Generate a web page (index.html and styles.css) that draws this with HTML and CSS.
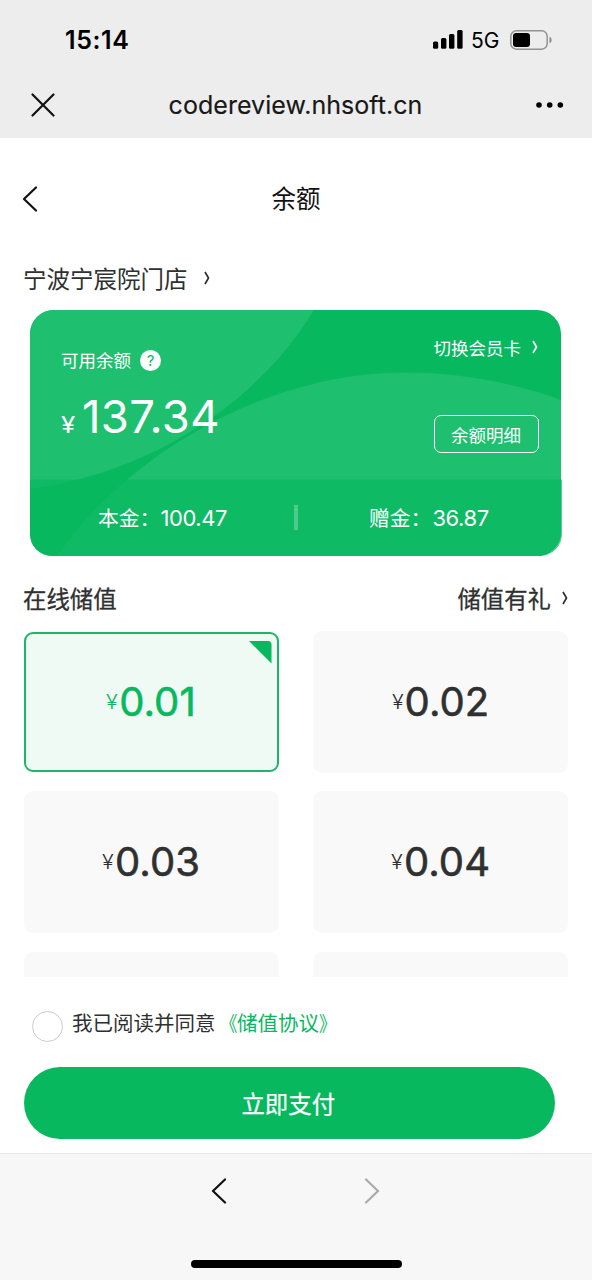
FILE: index.html
```html
<!DOCTYPE html>
<html lang="zh-CN">
<head>
<meta charset="utf-8">
<title>余额</title>
<link rel="stylesheet" href="styles.css">
</head>
<body>
<div class="app">
  <header class="browser">
    <div class="status">
      <span class="clock">15:14</span>
      <div class="indicators">
        <svg class="signal" width="30" height="19" viewBox="0 0 30 19"><rect x="0" y="11.5" width="5.2" height="7.2" rx="1.5"/><rect x="8" y="8" width="5.4" height="10.7" rx="1.5"/><rect x="16" y="4" width="5.4" height="14.7" rx="1.5"/><rect x="24.2" y="0" width="5.4" height="18.7" rx="1.5"/></svg>
        <span class="network">5G</span>
        <svg width="42" height="20" viewBox="0 0 42 20"><rect x=".8" y=".8" width="36.4" height="18.4" rx="5.5" fill="none" stroke="#929292" stroke-width="1.5"/><rect x="3" y="3" width="17" height="14" rx="3.2"/><path d="M39.5 6.8c2.8 1 2.8 5.4 0 6.4z" fill="#888"/></svg>
      </div>
    </div>
    <div class="address">
      <svg width="24" height="24" viewBox="0 0 24 24" class="line"><path d="M1.5 1.5l21 21M22.500 1.500l-21 21"/></svg>
      <span class="domain">codereview.nhsoft.cn</span>
      <svg width="28" height="6" viewBox="0 0 28 6"><circle cx="3" cy="3" r="2.8"/><circle cx="13.700" cy="3" r="2.8"/><circle cx="24.300" cy="3" r="2.800"/></svg>
    </div>
  </header>

  <div class="titlebar">
    <svg width="16" height="26" viewBox="0 0 16 26" class="line"><path d="M14 1.500L2 13l12 11.500"/></svg>
    <h1 class="title">余额</h1>
  </div>

  <div class="store">
    <span>宁波宁宸院门店</span>
    <svg width="8" height="14" viewBox="0 0 8 14" class="chevron"><path d="M2 1l3.500 6L2 13"/></svg>
  </div>

  <section class="card">
    <svg class="card-art" width="532" height="246" viewBox="0 0 532 246">
      <path class="base" d="M24 0H507a24 24 0 0 1 24 24V222a24 24 0 0 1-24 24H22A22 22 0 0 1 0 224V24A24 24 0 0 1 24 0z"/>
      <path class="wave" d="M0 179C105 165 220 105 284 0H24A24 24 0 0 0 0 24z"/>
      <path class="wave" d="M27 246C97 145 235 62.500 375 62.500C430 62.500 485 73 531 90V222a24 24 0 0 1-24 24z"/>
      <path class="strip" d="M0 169.500H532V224a22 22 0 0 1-22 22H22A22 22 0 0 1 0 224z"/>
    </svg>
    <div class="card-main">
      <div class="balance">
        <div class="label">可用余额 <span class="help">?</span></div>
        <div class="amount"><span class="yen">¥</span><span class="value">137.34</span></div>
      </div>
      <div class="card-actions">
        <div class="switch">切换会员卡 <svg width="8" height="14" viewBox="0 0 8 14" class="chevron"><path d="M2 1l3.500 6L2 13"/></svg></div>
        <div class="details">余额明细</div>
      </div>
    </div>
    <div class="split">
      <div class="part principal">本金：<span class="num">100.47</span></div>
      <i class="divider"></i>
      <div class="part bonus">赠金：<span class="num">36.87</span></div>
    </div>
  </section>

  <div class="section-head">
    <span>在线储值</span>
    <span class="gift">储值有礼 <svg width="8" height="14" viewBox="0 0 8 14" class="chevron"><path d="M2 1l3.500 6L2 13"/></svg></span>
  </div>

  <div class="options">
    <div class="option selected"><span class="sym">¥</span><span class="price">0.01</span>
      <svg class="corner" width="23" height="23" viewBox="0 0 23 23"><path d="M0 0H19a3.500 3.500 0 0 1 3.500 3.500V22.500z"/></svg></div>
    <div class="option"><span class="sym">¥</span><span class="price">0.02</span></div>
    <div class="option"><span class="sym">¥</span><span class="price">0.03</span></div>
    <div class="option"><span class="sym">¥</span><span class="price">0.04</span></div>
    <div class="option"></div>
    <div class="option"></div>
  </div>

  <div class="agree">
    <i class="radio"></i>
    <span class="terms">我已阅读并同意<span class="link"><span class="mark open">《</span>储值协议<span class="mark close">》</span></span></span>
  </div>
  <div class="pay">立即支付</div>

  <footer class="toolbar">
    <div class="history">
      <svg width="16" height="26" viewBox="0 0 16 26" class="line"><path d="M14 1.500L2 13l12 11.500"/></svg>
      <svg width="16" height="26" viewBox="0 0 16 26" class="line muted"><path d="M2 1.500L14 13 2 24.500"/></svg>
    </div>
    <div class="home"></div>
  </footer>
</div>
</body>
</html>
```
FILE: styles.css
```css
* { box-sizing: border-box; }
body { margin: 0; background: #fff; color: #2f3030; font-family: Inter, "Noto Sans CJK SC", sans-serif; }
svg { display: block; flex: none; }
.app { width: 592px; height: 1280px; display: flex; flex-direction: column; overflow: hidden; }
.app > * { flex: none; }
.line { fill: none; stroke: #111; stroke-width: 2.2; stroke-linecap: round; stroke-linejoin: round; }
.muted { stroke: #aaa; }
.chevron { fill: none; stroke: currentColor; stroke-width: 1.7; stroke-linejoin: round; }

.browser { height: 138px; background: #ededed; color: #000; }
.status { height: 74px; padding: 5px 40px 0 65px; display: flex; align-items: center; justify-content: space-between; }
.clock { font-size: 25px; font-weight: 600; letter-spacing: .6px; }
.indicators { display: flex; align-items: center; }
.network { width: 47px; padding-left: 8px; font-size: 21px; letter-spacing: -.1px; padding-top: 1px; }
.address { height: 64px; padding: 0 28px 2px 31px; display: flex; align-items: center; justify-content: space-between; }
.domain { width: 255px; font-size: 25px; letter-spacing: .05px; white-space: nowrap; color: #181818; display: flex; justify-content: center; -webkit-text-stroke: .15px #181818; }

.titlebar { height: 122px; padding: 0 22px; display: grid; grid-template-columns: 16px 1fr 16px; align-items: center; }
.title { margin: 0; font-size: 24.500px; font-weight: 400; line-height: 36px; text-align: center; color: #111; }
.store { height: 50px; padding: 0 24px 14px 23px; display: flex; align-items: center; gap: 15px; font-size: 23.500px; }

.card { position: relative; width: 532px; height: 246px; margin-left: 30px; color: #fff; }
.card-art { position: absolute; inset: 0; }
.base { fill: #07b85f; }
.wave { fill: #1fbf70; }
.strip { fill: #07b85f; fill-opacity: .68; }
.card-main { position: relative; height: 169px; padding: 24px 23px 0 31px; display: flex; justify-content: space-between; }
.label { margin-top: 12px; height: 26px; display: flex; align-items: center; gap: 9px; font-size: 17.500px; }
.help { width: 21px; height: 21px; margin-top: 2px; border-radius: 50%; background: #fff; color: #07b85f; font-size: 15px; line-height: 21px; text-align: center; }
.amount { margin-top: 17px; height: 56px; display: flex; align-items: baseline; line-height: 56px; }
.yen { width: 21px; font-size: 23px; transform: scaleX(1.12); transform-origin: left; }
.value { font-size: 45.500px; letter-spacing: .3px; }
.card-actions { display: flex; flex-direction: column; align-items: flex-end; }
.switch { height: 26px; display: flex; align-items: center; gap: 10px; font-size: 17.500px; }
.details { margin-top: 55px; width: 105px; height: 38px; padding: 1px 1px 0 0; border: 1.500px solid #fff; border-radius: 7px; font-size: 17.500px; display: flex; align-items: center; justify-content: center; }
.split { position: relative; height: 77px; display: flex; align-items: center; font-size: 20.800px; }
.part { display: flex; align-items: center; margin-bottom: 1px; }
.principal { width: 264px; padding-left: 68px; }
.num { font-size: 22px; letter-spacing: -.4px; padding-top: 1px; }
.divider { width: 4px; height: 25px; background: #4dcb8d; }
.bonus { padding-left: 71px; }
.bonus .num { padding-left: 1px; }

.section-head { height: 75px; padding: 8px 23px 0; display: flex; align-items: center; justify-content: space-between; font-size: 23.400px; -webkit-text-stroke: .3px currentColor; }
.gift { display: flex; align-items: center; gap: 10px; }
.options { height: 346px; padding: 0 23.500px; overflow: hidden; display: grid; grid-template-columns: 255px 255px; grid-auto-rows: 142px; column-gap: 34.500px; row-gap: 18.300px; }
.option { position: relative; padding-bottom: 2px; display: flex; align-items: center; justify-content: center; background: #f9f9f9; border-radius: 9px; }
.selected { margin: 1px 0; padding-bottom: 1px; color: #07b85f; background: #f0faf5; border: 2px solid #1fb36b; }
.sym { width: 13px; padding-top: 1px; font-size: 20px; font-weight: 300; transform: scaleX(1.08); transform-origin: left; }
.price { font-size: 40px; font-weight: 400; letter-spacing: .1px; -webkit-text-stroke: .6px currentColor; }
.corner { position: absolute; top: 7px; right: 5px; fill: #07b85f; }

.agree { height: 90px; padding: 3px 32px 0; display: flex; align-items: center; gap: 9px; font-size: 20.500px; }
.radio { width: 31px; height: 31px; margin-top: 6px; border: 1.500px solid #ccc; border-radius: 50%; }
.terms { display: flex; margin-bottom: 3px; }
.link { display: flex; color: #07b85f; }
.mark { display: inline-block; transform: scaleX(.85); }
.open { transform-origin: right; margin-left: 1px; }
.close { transform-origin: left; }
.pay { width: 531.500px; height: 72px; margin-left: 23.500px; padding-right: 2px; border-radius: 36px; background: #07b85f; color: #fff; display: flex; align-items: center; justify-content: center; font-size: 23.400px; -webkit-text-stroke: .25px currentColor; }
.toolbar { height: 127px; margin-top: 14px; border-top: 1px solid #e8e8e8; background: #f7f7f7; display: flex; flex-direction: column; align-items: center; }
.history { margin: 24px 1px 0 0; display: flex; gap: 137px; }
.home { width: 211px; height: 8px; margin-top: 56px; border-radius: 4px; background: #000; }
```
